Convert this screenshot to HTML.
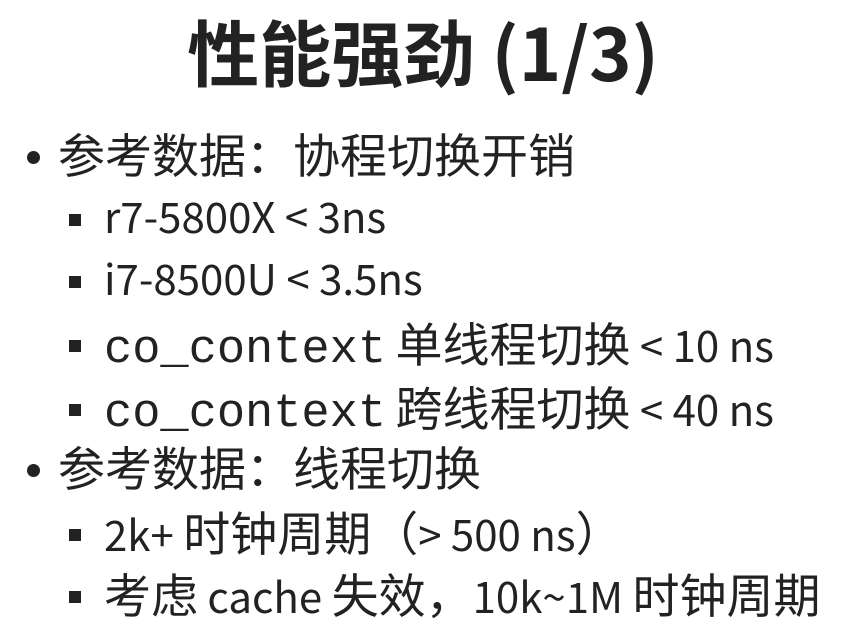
<!DOCTYPE html>
<html><head><meta charset="utf-8"><style>
html,body{margin:0;padding:0;background:#fff;width:846px;height:637px;overflow:hidden}
body{position:relative;color:#222;font-family:"Noto Sans CJK SC","Liberation Sans",sans-serif}
.t{position:absolute;left:0;width:846px;text-align:center;top:5px;height:90px;line-height:90px;font-size:72px;font-weight:700}
.l{position:absolute;height:60px;line-height:60px;font-size:42px;white-space:nowrap}
.c{font-size:47px}
.l1{left:58px}
.l2{left:104px}
.d{position:absolute;left:27px;width:13px;height:13px;border-radius:50%;background:#222}
.s{position:absolute;left:69px;width:12px;height:12px;background:#222}
.m{font-family:"Liberation Mono","DejaVu Sans Mono",monospace;font-size:47px}
</style></head><body>
<div class="t">性能强劲 (1/3)</div>

<div class="d" style="top:151px"></div><div class="l l1" style="top:123px"><span class="c">参考数据：协程切换开销</span></div>
<div class="s" style="top:214px"></div><div class="l l2" style="top:186px">r7-5800X &lt; 3ns</div>
<div class="s" style="top:276px"></div><div class="l l2" style="top:248px">i7-8500U &lt; 3.5ns</div>
<div class="s" style="top:340px"></div><div class="l l2" style="top:312px"><span class="m">co_context</span> <span class="c">单线程切换</span> &lt; 10 ns</div>
<div class="s" style="top:404px"></div><div class="l l2" style="top:376px"><span class="m">co_context</span> <span class="c">跨线程切换</span> &lt; 40 ns</div>
<div class="d" style="top:464px"></div><div class="l l1" style="top:436px"><span class="c">参考数据：线程切换</span></div>
<div class="s" style="top:529px"></div><div class="l l2" style="top:501px">2k+ <span class="c">时钟周期（</span>&gt; 500 ns<span class="c">）</span></div>
<div class="s" style="top:591px"></div><div class="l l2" style="top:563px"><span class="c">考虑</span> cache <span class="c">失效，</span>10k~1M <span class="c">时钟周期</span></div>
</body></html>
